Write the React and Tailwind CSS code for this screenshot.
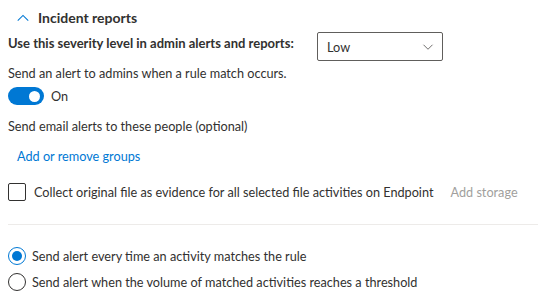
export default function App() {
  return (
    <div className="w-[538px] h-[294px] bg-white overflow-hidden text-[#323130] text-[12.7px] leading-[18px] whitespace-nowrap" style={{ fontFamily: '"Segoe UI", Lato, sans-serif' }}>
      <div className="pl-2">
        {/* Header */}
        <div className="flex items-center h-[20px] mt-[8px] pl-[8px]">
          <svg width="14" height="14" viewBox="0 0 16 16" fill="none" stroke="#0078d4" strokeWidth="1.2">
            <path d="M2 11 L8 5 L14 11" />
          </svg>
          <span className="ml-[8px] font-bold text-[14px] text-[#323130]">Incident reports</span>
        </div>

        {/* Severity */}
        <div className="flex items-start mt-[4px]">
          <span className="font-bold text-[13px] mt-[2px] w-[309px]">Use this severity level in admin alerts and reports:</span>
          <div className="flex items-center justify-between w-[126px] h-[29px] border border-[#605e5c] rounded-[2px] pl-[9px] pr-[8px]">
            <span>Low</span>
            <svg width="12" height="12" viewBox="0 0 16 16" fill="none" stroke="#605e5c" strokeWidth="1.2">
              <path d="M2 5 L8 11 L14 5" />
            </svg>
          </div>
        </div>

        {/* Toggle */}
        <div className="mt-[3px]">Send an alert to admins when a rule match occurs.</div>
        <div className="flex items-center mt-[4px] h-[20px]">
          <div className="w-[36px] h-[18px] rounded-full bg-[#0078d4] flex items-center justify-end pr-[4px]">
            <div className="w-[11px] h-[11px] rounded-full bg-white" />
          </div>
          <span className="ml-[7px]">On</span>
        </div>

        <div className="mt-[11px]">Send email alerts to these people (optional)</div>
        <div className="mt-[12px] pl-[9px] text-[#0078d4]">Add or remove groups</div>

        {/* Checkbox */}
        <div className="flex items-center mt-[17px] h-[20px]">
          <div className="w-[18px] h-[18px] border border-[#323130] rounded-[2px]" />
          <span className="ml-[8px]">Collect original file as evidence for all selected file activities on Endpoint</span>
          <span className="ml-[17px] text-[#a19f9d]">Add storage</span>
        </div>

        <div className="mt-[22px] h-px bg-[#edebe9]" />

        {/* Radios */}
        <div className="flex items-center mt-[21px] h-[20px]">
          <div className="w-[18px] h-[18px] rounded-full border border-[#0078d4] flex items-center justify-center">
            <div className="w-[10px] h-[10px] rounded-full bg-[#0078d4]" />
          </div>
          <span className="ml-[6px]">Send alert every time an activity matches the rule</span>
        </div>
        <div className="flex items-center mt-[6px] h-[20px]">
          <div className="w-[18px] h-[18px] rounded-full border border-[#323130]" />
          <span className="ml-[6px]">Send alert when the volume of matched activities reaches a threshold</span>
        </div>
      </div>
    </div>
  )
}
